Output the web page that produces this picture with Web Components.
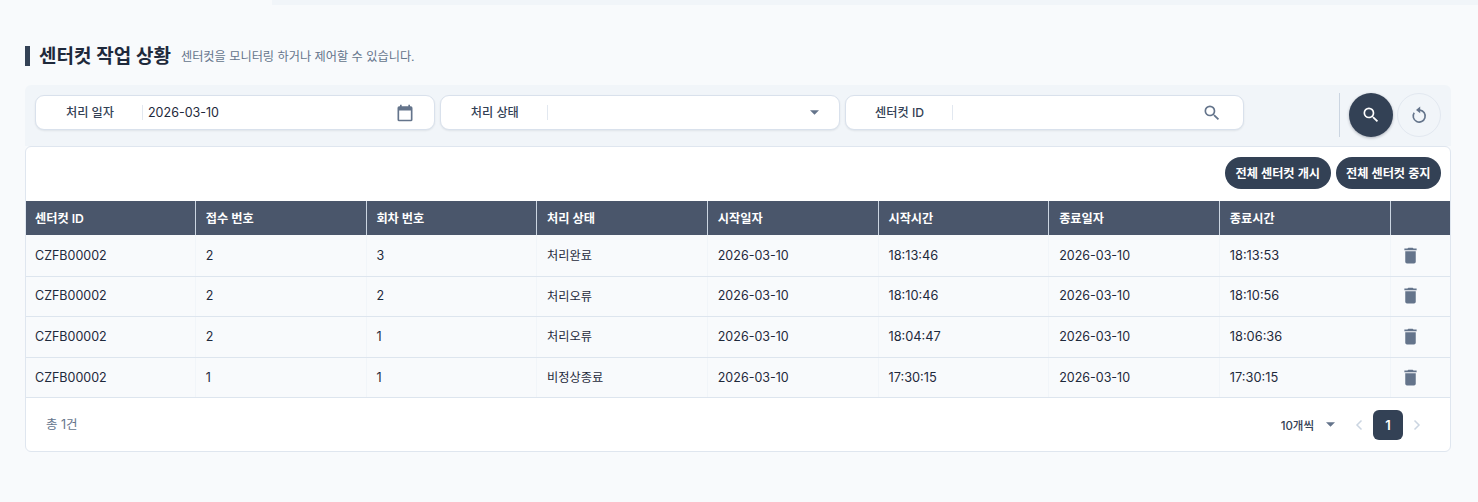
<!DOCTYPE html>
<html lang="ko">
<head>
<meta charset="utf-8">
<title>센터컷 작업 상황</title>
<style>
  html, body { margin: 0; padding: 0; height: 502px; overflow: hidden; }
  body {
    background: #f8fafc;
    font-family: Inter, "Noto Sans CJK KR", sans-serif;
    color: #1e293b;
  }
</style>
</head>
<body>
<job-page>
  <section-title slot="title" sub="센터컷을 모니터링 하거나 제어할 수 있습니다.">센터컷 작업 상황</section-title>
  <filter-bar slot="filters">
    <filter-field label="처리 일자" value="2026-03-10" icon="calendar" gap="19"></filter-field>
    <filter-field label="처리 상태" icon="caret" gap="14"></filter-field>
    <filter-field label="센터컷 ID" icon="search" gap="21"></filter-field>
  </filter-bar>
  <job-table slot="table"></job-table>
</job-page>

<script>
const ICONS = {
  calendar: '<svg width="20" height="20" viewBox="0 0 24 24" fill="#64748b"><path d="M19 4h-1V2h-2v2H8V2H6v2H5a2 2 0 0 0-2 2v14a2 2 0 0 0 2 2h14a2 2 0 0 0 2-2V6a2 2 0 0 0-2-2zm0 16H5V9h14v11z"/></svg>',
  caret: '<svg width="9" height="5" viewBox="0 0 10 5" fill="#64748b"><path d="M0 0h10L5 5z"/></svg>',
  search: '<svg width="20" height="20" viewBox="0 0 24 24" fill="#64748b"><path d="M15.5 14h-.79l-.28-.27A6.47 6.47 0 0 0 16 9.5 6.5 6.5 0 1 0 9.5 16c1.61 0 3.09-.59 4.23-1.57l.27.28v.79l5 4.99L20.49 19l-4.99-5zm-6 0C7.01 14 5 11.99 5 9.5S7.01 5 9.5 5 14 7.01 14 9.5 11.99 14 9.5 14z"/></svg>',
  searchWhite: '<svg width="20" height="20" viewBox="0 0 24 24" fill="#fff"><path d="M15.5 14h-.79l-.28-.27A6.47 6.47 0 0 0 16 9.5 6.5 6.5 0 1 0 9.5 16c1.61 0 3.09-.59 4.23-1.57l.27.28v.79l5 4.99L20.49 19l-4.99-5zm-6 0C7.01 14 5 11.99 5 9.5S7.01 5 9.5 5 14 7.01 14 9.5 11.99 14 9.5 14z"/></svg>',
  reset: '<svg width="18" height="20" viewBox="0 0 18 20"><path d="M10 5.1a6 6 0 1 1-5.8 2.6" fill="none" stroke="#64748b" stroke-width="1.6"/><path d="M10.2 1.6v6.6L6 4.9z" fill="#64748b"/></svg>',
  trash: '<svg width="21" height="21" viewBox="0 0 24 24" fill="#64748b"><path d="M6 19a2 2 0 0 0 2 2h8a2 2 0 0 0 2-2V7H6v12zM19 4h-3.5l-1-1h-5l-1 1H5v2h14V4z"/></svg>'
};

class JobPage extends HTMLElement {
  constructor() {
    super();
    this.attachShadow({ mode: "open" });
    this.shadowRoot.innerHTML = `
      <style>
        :host { display: block; height: 502px; box-sizing: border-box; }
        .top { display: flex; height: 5px; }
        .top i { display: block; }
        .top .left { width: 272px; }
        .top .right { flex: 1; background: #f1f5f9; }
        .main { padding: 39px 27px 0 25px; display: flex; flex-direction: column; }
      </style>
      <div class="top"><i class="left"></i><i class="right"></i></div>
      <div class="main">
        <slot name="title"></slot>
        <slot name="filters"></slot>
        <slot name="table"></slot>
      </div>
    `;
  }
}

class SectionTitle extends HTMLElement {
  constructor() {
    super();
    this.attachShadow({ mode: "open" });
    this.shadowRoot.innerHTML = `
      <style>
        :host { display: flex; align-items: center; height: 24px; margin-bottom: 17px; }
        .bar { width: 5px; height: 20px; background: #334155; margin-right: 9px; }
        .main { font-size: 19px; font-weight: 600; color: #1e293b; margin-right: 10px; line-height: 22px; position: relative; top: 1px; }
        .sub { font-size: 12.2px; color: #64748b; line-height: 16px; position: relative; top: 1px; }
      </style>
      <span class="bar"></span>
      <span class="main"><slot></slot></span>
      <span class="sub">${this.getAttribute("sub")}</span>
    `;
  }
}

class FilterBar extends HTMLElement {
  constructor() {
    super();
    this.attachShadow({ mode: "open" });
    this.shadowRoot.innerHTML = `
      <style>
        :host { display: block; }
        .bar {
          display: flex; align-items: flex-start; height: 61px; box-sizing: border-box;
          background: #f1f5f9; border-radius: 6px 6px 0 0; padding: 10px 10px 0;
        }
        .fields { display: flex; gap: 5px; }
        .actions {
          margin: -2px 0 0 auto; display: flex; align-items: center; gap: 4px;
          border-left: 1px solid #cbd5e1; height: 44px; padding-left: 9px;
        }
        button {
          width: 44px; height: 44px; padding: 0; border-radius: 50%;
          display: flex; align-items: center; justify-content: center;
        }
        .go { background: #334155; border: 0; box-shadow: 0 1px 3px rgba(15,23,42,.3); }
        .reset { background: transparent; border: 1px solid #e2e8f0; }
      </style>
      <div class="bar">
        <div class="fields"><slot></slot></div>
        <div class="actions">
          <button class="go" type="button" aria-label="검색">${ICONS.searchWhite}</button>
          <button class="reset" type="button" aria-label="초기화">${ICONS.reset}</button>
        </div>
      </div>
    `;
  }
}

class FilterField extends HTMLElement {
  constructor() {
    super();
    this.attachShadow({ mode: "open" });
    const value = this.getAttribute("value") || "";
    this.shadowRoot.innerHTML = `
      <style>
        :host {
          display: flex; align-items: center; box-sizing: border-box;
          width: 399.8px; height: 35px; background: #fff;
          border: 1px solid #d9e1ec; border-radius: 9px;
          box-shadow: 0 1px 2px rgba(15,23,42,.08);
        }
        .label {
          width: 107px; box-sizing: border-box; padding-left: 2px; text-align: center; font-weight: 500;
          font-size: 12.2px; color: #334155; border-right: 1px solid #e2e8f0; line-height: 15px;
        }
        .value { flex: 1; padding-left: 5px; color: #1e293b; font-size: 12.5px; }
        .icon { width: 20px; height: 20px; display: flex; align-items: center; justify-content: center; margin-right: ${this.getAttribute("gap")}px; }
      </style>
      <span class="label">${this.getAttribute("label")}</span>
      <span class="value">${value}</span>
      <span class="icon">${ICONS[this.getAttribute("icon")]}</span>
    `;
  }
}

const COLUMNS = ["센터컷 ID", "접수 번호", "회차 번호", "처리 상태", "시작일자", "시작시간", "종료일자", "종료시간", ""];
const ROWS = [
  ["CZFB00002", "2", "3", "처리완료", "2026-03-10", "18:13:46", "2026-03-10", "18:13:53"],
  ["CZFB00002", "2", "2", "처리오류", "2026-03-10", "18:10:46", "2026-03-10", "18:10:56"],
  ["CZFB00002", "2", "1", "처리오류", "2026-03-10", "18:04:47", "2026-03-10", "18:06:36"],
  ["CZFB00002", "1", "1", "비정상종료", "2026-03-10", "17:30:15", "2026-03-10", "17:30:15"]
];
// row content heights and the nudge that keeps the text on the reference's baselines
const ROW_HEIGHTS = [41, 39, 40, 39];
const ROW_NUDGE = [1, 2, 2, 1];
const GRID = "170px repeat(7, 170.7px) 1fr";

class JobTable extends HTMLElement {
  constructor() {
    super();
    this.attachShadow({ mode: "open" });
    const head = COLUMNS.map(c => `<div class="th">${c}</div>`).join("");
    const rows = ROWS.map((r, i) => `
      <div class="row" style="height:${ROW_HEIGHTS[i]}px;--nudge:${ROW_NUDGE[i]}px">
        ${r.map((c, n) => `<div class="td ${n == 3 ? "ko" : n == 5 || n == 7 ? "time" : ""}">${c}</div>`).join("")}
        <div class="td act">${ICONS.trash}</div>
      </div>`).join("");
    this.shadowRoot.innerHTML = `
      <style>
        :host {
          display: block; box-sizing: border-box; height: 306px;
          background: #fff; border: 1px solid #dfe6ef; border-radius: 6px;
          font-size: 12.5px; overflow: hidden;
        }
        .tools { height: 54px; box-sizing: border-box; display: flex; justify-content: flex-end; align-items: center; gap: 5px; padding: 0 9px 2px 0; }
        .pill {
          height: 32px; width: 105.5px; padding: 0; border: 0; border-radius: 16px;
          background: #334155; color: #fff; font: 600 12.2px Inter, "Noto Sans CJK KR", sans-serif;
          white-space: nowrap;
        }
        .head, .row { display: grid; grid-template-columns: ${GRID}; }
        .head { height: 34px; background: #4a566b; }
        .th {
          display: flex; align-items: center; padding-left: 9.7px; color: #fff;
          font-weight: 600; font-size: 12.2px; border-right: 1px solid #cbd5e1; box-sizing: border-box;
        }
        .th:first-child, .td:first-child { padding-left: 9px; }
        .th:last-child { border-right: 0; }
        .row { background: #f8fafc; border-bottom: 1px solid #dde5ee; box-sizing: content-box; }
        .td {
          display: flex; align-items: center; padding-left: 9.7px; color: #1e293b;
          padding-bottom: var(--nudge, 0); border-right: 1px solid #f1f5f9; box-sizing: border-box;
        }
        .td.ko { font-size: 12.2px; line-height: 16px; padding-top: 2px; }
        .td.time { font-size: 12.8px; }
        .td.act { padding-left: 9px; }
        .td:last-child { border-right: 0; }
        .foot {
          height: 53px; display: flex; align-items: center; padding: 0 24px 0 20px;
        }
        .total { color: #64748b; font-size: 12.5px; position: relative; top: -1px; }
        .pager { margin-left: auto; display: flex; align-items: center; }
        .size { font-size: 11.5px; font-weight: 500; color: #334155; margin-right: 12px; }
        .caret { display: flex; margin-right: 15px; }
        .chev { width: 18px; display: flex; justify-content: center; }
        .cur {
          width: 30px; height: 30px; border-radius: 6px; background: #334155; color: #fff;
          display: flex; align-items: center; justify-content: center; font-weight: 600; font-size: 13px;
          margin: 0 5px;
        }
      </style>
      <div class="tools">
        <button class="pill" type="button">전체 센터컷 개시</button>
        <button class="pill" type="button">전체 센터컷 중지</button>
      </div>
      <div class="head">${head}</div>
      ${rows}
      <div class="foot">
        <span class="total">총 1건</span>
        <div class="pager">
          <span class="size">10개씩</span>
          <span class="caret">${ICONS.caret}</span>
          <span class="chev"><svg width="8" height="12" viewBox="0 0 8 12" fill="none" stroke="#cbd5e1" stroke-width="1.5"><path d="M6.5 1.5 2 6l4.5 4.5"/></svg></span>
          <span class="cur">1</span>
          <span class="chev"><svg width="8" height="12" viewBox="0 0 8 12" fill="none" stroke="#cbd5e1" stroke-width="1.5"><path d="M1.5 1.5 6 6l-4.5 4.5"/></svg></span>
        </div>
      </div>
    `;
  }
}

customElements.define("job-page", JobPage);
customElements.define("section-title", SectionTitle);
customElements.define("filter-bar", FilterBar);
customElements.define("filter-field", FilterField);
customElements.define("job-table", JobTable);
</script>
</body>
</html>
